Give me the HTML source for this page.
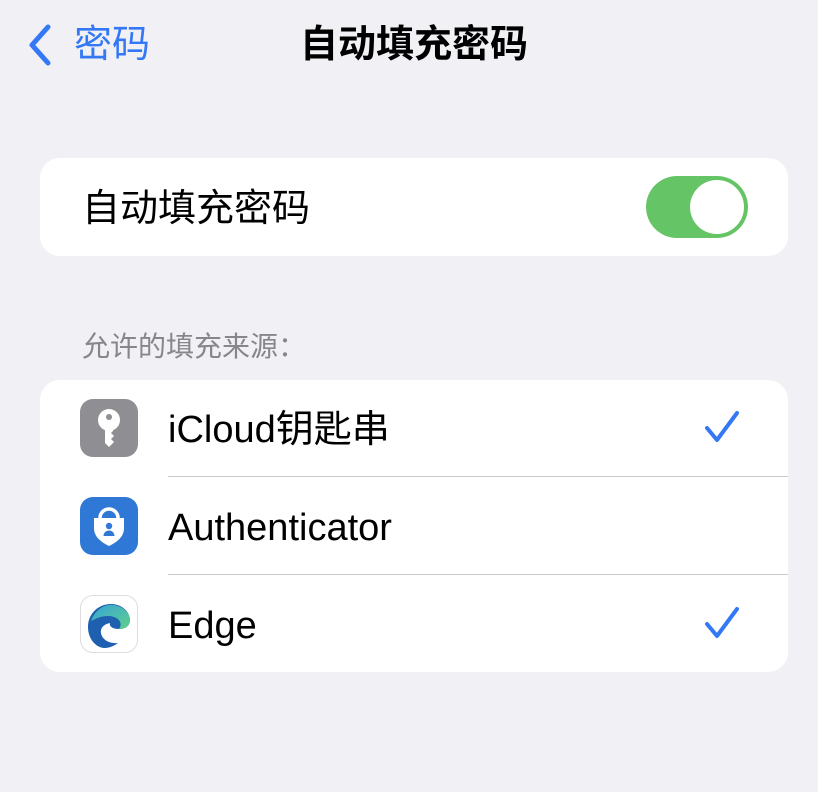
<!DOCTYPE html>
<html><head><meta charset="utf-8"><style>
body{margin:0;width:818px;height:792px;background:#f0f0f5;font-family:"Liberation Sans","Noto Sans CJK SC",sans-serif;position:relative;overflow:hidden}
.a{position:absolute}
.card{position:absolute;left:40px;width:748px;background:#fff;border-radius:20px}
.t{font-size:38px;line-height:44px;color:#000;white-space:nowrap}
.ic{position:absolute;left:40px;width:58px;height:58px;border-radius:13px}
.chk{position:absolute;right:48px}
</style></head><body>
<svg class="a" style="left:26px;top:24px" width="28" height="42"><path d="M22 3 L6 21 L22 39" fill="none" stroke="#3478f6" stroke-width="5" stroke-linecap="round" stroke-linejoin="round"/></svg>
<div class="a" style="left:74px;top:22px;font-size:38px;line-height:46px;color:#3478f6">密码</div>
<div class="a" style="left:300px;top:22px;font-size:38px;line-height:46px;font-weight:bold">自动填充密码</div>
<div class="card" style="top:158px;height:98px">
<div class="a" style="left:42px;top:28px;font-size:38px;line-height:46px">自动填充密码</div>
<div class="a" style="left:606px;top:18px;width:102px;height:62px;border-radius:31px;background:#65c466"><div class="a" style="right:4px;top:4px;width:54px;height:54px;border-radius:50%;background:#fff"></div></div>
</div>
<div class="a" style="left:82px;top:330px;font-size:28px;line-height:34px;color:#86868b">允许的填充来源：</div>
<div class="card" style="top:380px;height:292px">
<div class="ic" style="top:19px;background:#8e8e93"><svg width="58" height="58"><circle cx="29" cy="21" r="11" fill="#fff"/><circle cx="29" cy="18" r="3" fill="#8e8e93"/><path d="M25 28h8v4l-2 2 3 3-3 3 3 3-5 5-4-4z" fill="#fff"/></svg></div>
<div class="a t" style="left:128px;top:28px">iCloud钥匙串</div>
<svg class="chk" style="top:30px" width="36" height="34"><path d="M3 18l10 12L33 3" fill="none" stroke="#3478f6" stroke-width="4" stroke-linecap="round" stroke-linejoin="round"/></svg>
<div class="a" style="left:128px;top:96px;right:0;height:1px;background:#c8c8cc"></div>
<div class="ic" style="top:117px;background:#2f78d6"><svg width="58" height="58"><path d="M20 21a9 9 0 0 1 18 0" fill="none" stroke="#fff" stroke-width="3.5"/><path d="M14 21h30v10c0 9-7 14-15 18-8-4-15-9-15-18z" fill="#fff"/><circle cx="29" cy="29" r="3.2" fill="#2f78d6"/><path d="M23.5 39a5.5 5.5 0 0 1 11 0z" fill="#2f78d6"/></svg></div>
<div class="a t" style="left:128px;top:126px">Authenticator</div>
<div class="a" style="left:128px;top:194px;right:0;height:1px;background:#c8c8cc"></div>
<div class="ic" style="top:215px;background:#fff;border:1px solid #ddd;width:56px;height:56px"><svg width="56" height="56"><defs><linearGradient id="g" x1="0" y1="0" x2="1" y2="1"><stop offset="0" stop-color="#36a3d9"/><stop offset="1" stop-color="#5fd08a"/></linearGradient></defs><path d="M7 31C7 18 17 8 30 8c11 0 19 8 19 16 0 6-5 9-11 9-7 0-10-3-9-6-6 1-10 5-9 10 1 7 9 11 17 10-4 3-9 5-13 5C15 52 7 43 7 31z" fill="#1f5fb0"/><path d="M10 25c4-11 13-17 22-16 10 1 17 8 17 15 0 5-4 9-11 9 5-7-2-13-11-13-7 0-13 3-17 5z" fill="url(#g)"/></svg></div>
<div class="a t" style="left:128px;top:224px">Edge</div>
<svg class="chk" style="top:226px" width="36" height="34"><path d="M3 18l10 12L33 3" fill="none" stroke="#3478f6" stroke-width="4" stroke-linecap="round" stroke-linejoin="round"/></svg>
</div>
</body></html>
